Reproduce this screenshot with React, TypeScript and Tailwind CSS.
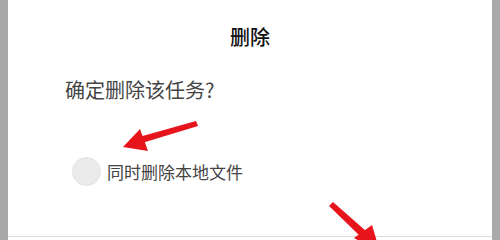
import React, { useState } from 'react';

const Arrow: React.FC<{ className?: string; d: string; head: string }> = ({ className, d, head }) => (
  <svg className={className} viewBox="0 0 500 240" width={500} height={240} aria-hidden="true">
    <path d={d} fill="#e8141c" />
    <polygon points={head} fill="#e8141c" />
  </svg>
);

export default function App() {
  const [alsoLocal, setAlsoLocal] = useState(false);

  return (
    <div
      className="relative w-[500px] h-[240px] overflow-hidden bg-[#a9a9a9] px-2"
      style={{ fontFamily: '"Noto Sans CJK SC", "Noto Sans", sans-serif' }}
    >
      <div className="h-full bg-white flex flex-col">
        <div className="pt-[22px] h-[52px] text-center text-[20px] leading-[30px] font-medium text-[#111]">删除</div>
        <div className="mt-[24px] pl-[57px] text-[20px] leading-[28px] text-[#444]">确定删除该任务?</div>
        <label className="mt-[53px] pl-[64px] flex items-center gap-[6px] cursor-pointer">
          <button
            onClick={() => setAlsoLocal(!alsoLocal)}
            className="w-[29px] h-[29px] rounded-full bg-[#ebebeb] border border-[#e2e2e2]"
            aria-pressed={alsoLocal}
          />
          <span className="text-[17px] leading-[26px] text-[#444]">同时删除本地文件</span>
        </label>
        <div className="mt-auto mb-[3px] border-t border-[#dcdcdc]" />
      </div>

      {/* annotation arrows drawn over the dialog */}
      <Arrow
        className="absolute left-0 top-0 pointer-events-none"
        d="M196 121 L198 126 L142 143 L139 137 Z"
        head="123,147 140,129 148,151"
      />
      <Arrow
        className="absolute left-0 top-0 pointer-events-none"
        d="M329 206 L333 202 L366 231 L360 236 Z"
        head="380,252 354,238 372,225"
      />
    </div>
  );
}
